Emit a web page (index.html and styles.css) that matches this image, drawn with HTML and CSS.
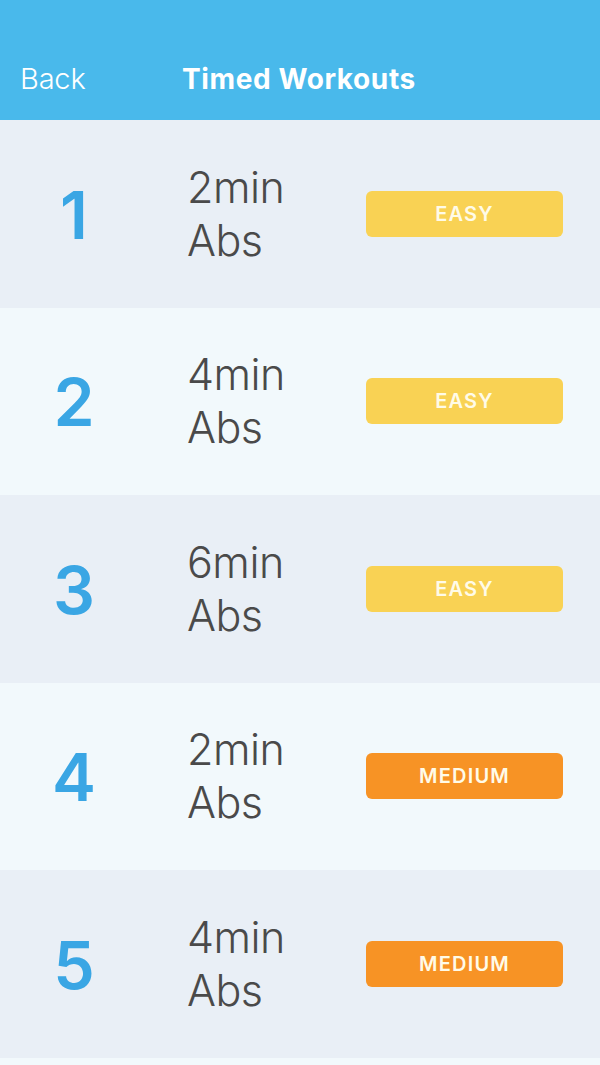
FILE: index.html
```html
<!DOCTYPE html>
<html lang="en">
<head>
  <meta charset="UTF-8">
  <title>Timed Workouts</title>
  <link rel="stylesheet" href="styles.css">
</head>
<body>

<!-- top bar -->
<div class="topbar">
  <span class="back">Back</span>
  <span class="title">Timed Workouts</span>
</div>

<div class="list">
  <div class="row odd">
    <div class="num">1</div>
    <div class="name">2min<br>Abs</div>
    <div class="badge easy">EASY</div>
  </div>
  <div class="row even">
    <div class="num">2</div>
    <div class="name">4min<br>Abs</div>
    <div class="badge easy">EASY</div>
  </div>
  <div class="row odd">
    <div class="num">3</div>
    <div class="name">6min<br>Abs</div>
    <div class="badge easy">EASY</div>
  </div>
  <div class="row even">
    <div class="num">4</div>
    <div class="name">2min<br>Abs</div>
    <div class="badge medium">MEDIUM</div>
  </div>
  <div class="row odd">
    <div class="num">5</div>
    <div class="name">4min<br>Abs</div>
    <div class="badge medium">MEDIUM</div>
  </div>
  <div class="row even last"></div>
</div>

</body>
</html>
```

FILE: styles.css
```css
body {
  margin: 0;
  font-family: "Inter", "Liberation Sans", sans-serif;
  background: #f2f9fc;
  overflow: hidden;
}
.topbar {
  height: 120px;
  background: #49b9eb;
  color: #fff;
  display: flex;
  align-items: flex-end;
  padding: 0 0 24px 20px;
  box-sizing: border-box;
}
.back {
  font-size: 29px;
  font-weight: 300;
  width: 162px;
  letter-spacing: -0.2px;
}
.title {
  font-size: 28px;
  font-weight: 700;
  letter-spacing: 0.6px;
}
.row {
  height: 187.5px;
  display: flex;
  align-items: center;
}
.row.last {
  height: 8px;
}
.odd {
  background: #e9eff6;
}
.even {
  background: #f2f9fc;
}
.num {
  width: 148px;
  text-align: center;
  font-size: 66px;
  font-weight: 600;
  color: #3aa6e4;
  padding-top: 2px;
}
.name {
  width: 218px;
  padding-left: 39px;
  box-sizing: border-box;
  font-size: 43px;
  font-weight: 300;
  line-height: 53px;
  color: #4a4a4a;
  letter-spacing: -0.5px;
}
.badge {
  width: 197px;
  height: 46px;
  border-radius: 6px;
  color: #fffbe8;
  font-size: 20px;
  font-weight: 600;
  letter-spacing: 1.2px;
  display: flex;
  align-items: center;
  justify-content: center;
  margin-top: 0;
}
.easy {
  background: #f9d254;
}
.medium {
  background: #f79325;
}
```
